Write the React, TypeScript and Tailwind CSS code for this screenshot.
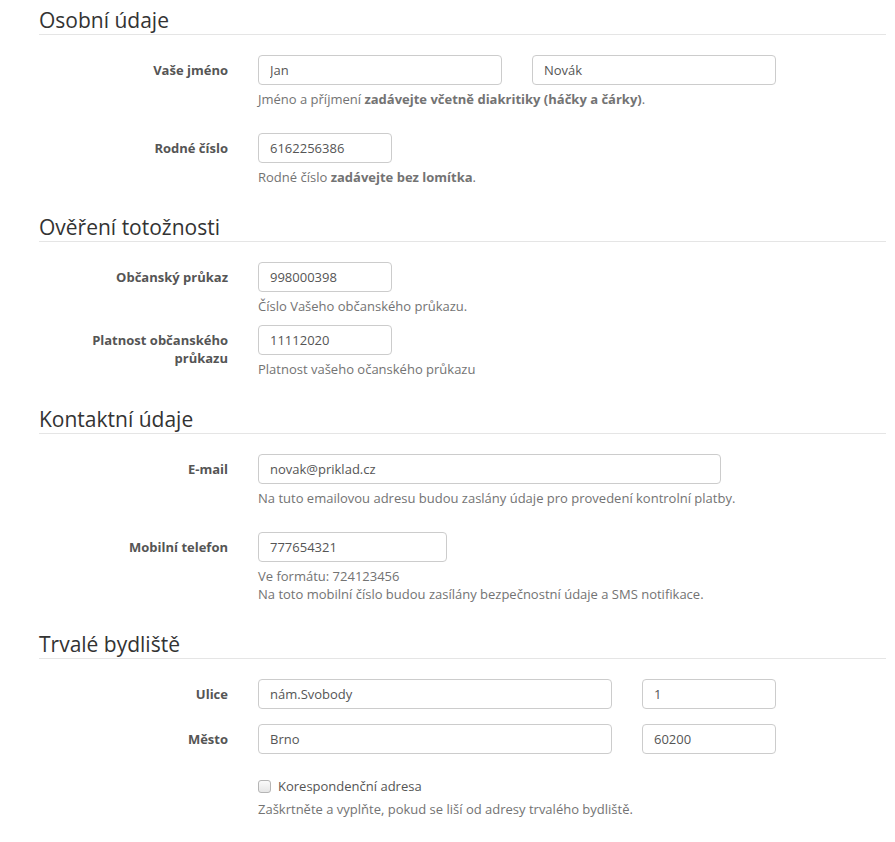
import React from "react";

const font = { fontFamily: '"Open Sans", "Liberation Sans", sans-serif' };

const Section = ({ title, children, className = "" }: { title: string; children: React.ReactNode; className?: string }) => (
  <section className={className}>
    <h2 className="text-[21px] leading-[28px] text-[#333] border-b border-[#e5e5e5] mb-[20px]">{title}</h2>
    {children}
  </section>
);

const Row = ({ label, children, className = "" }: { label: React.ReactNode; children: React.ReactNode; className?: string }) => (
  <div className={"flex " + className}>
    <label className="w-[189px] shrink-0 text-right font-bold text-[13px] leading-[18px] pt-[6px] text-[#555]">{label}</label>
    <div className="ml-[30px] flex-1">{children}</div>
  </div>
);

const Input = ({ value, w }: { value: string; w: string }) => (
  <input
    readOnly
    value={value}
    className={"h-[30px] border border-[#ccc] rounded-[4px] px-[11px] text-[13px] text-[#555] bg-white outline-none " + w}
  />
);

const Help = ({ children }: { children: React.ReactNode }) => (
  <p className="mt-[5px] text-[13px] leading-[18px] text-[#737373]">{children}</p>
);

export default function App() {
  return (
    <div className="bg-white min-h-[842px] pl-[39px] pr-[9px] pt-[6px]" style={font}>
      <Section title="Osobní údaje">
        <Row label="Vaše jméno">
          <div className="flex gap-[30px]">
            <Input value="Jan" w="w-[244px]" />
            <Input value="Novák" w="w-[244px]" />
          </div>
          <Help>
            Jméno a příjmení <b>zadávejte včetně diakritiky (háčky a čárky)</b>.
          </Help>
        </Row>
        <Row label="Rodné číslo" className="mt-[25px]">
          <Input value="6162256386" w="w-[134px]" />
          <Help>
            Rodné číslo <b>zadávejte bez lomítka</b>.
          </Help>
        </Row>
      </Section>

      <Section title="Ověření totožnosti" className="mt-[27px]">
        <Row label="Občanský průkaz">
          <Input value="998000398" w="w-[134px]" />
          <Help>Číslo Vašeho občanského průkazu.</Help>
        </Row>
        <Row label={<>Platnost občanského<br />průkazu</>} className="mt-[10px]">
          <Input value="11112020" w="w-[134px]" />
          <Help>Platnost vašeho očanského průkazu</Help>
        </Row>
      </Section>

      <Section title="Kontaktní údaje" className="mt-[27px]">
        <Row label="E-mail">
          <Input value="novak@priklad.cz" w="w-[463px]" />
          <Help>Na tuto emailovou adresu budou zaslány údaje pro provedení kontrolní platby.</Help>
        </Row>
        <Row label="Mobilní telefon" className="mt-[25px]">
          <Input value="777654321" w="w-[189px]" />
          <Help>
            Ve formátu: 724123456
            <br />
            Na toto mobilní číslo budou zasílány bezpečnostní údaje a SMS notifikace.
          </Help>
        </Row>
      </Section>

      <Section title="Trvalé bydliště" className="mt-[27px]">
        <Row label="Ulice">
          <div className="flex gap-[30px]">
            <Input value="nám.Svobody" w="w-[354px]" />
            <Input value="1" w="w-[134px]" />
          </div>
        </Row>
        <Row label="Město" className="mt-[15px]">
          <div className="flex gap-[30px]">
            <Input value="Brno" w="w-[354px]" />
            <Input value="60200" w="w-[134px]" />
          </div>
        </Row>
        <div className="ml-[219px] mt-[23px]">
          <label className="flex items-center gap-[7px] text-[13px] leading-[18px] text-[#555]">
            <span className="w-[13px] h-[13px] rounded-[3px] border border-[#b5b5b5] bg-gradient-to-b from-[#fafafa] to-[#e6e6e6]" />
            Korespondenční adresa
          </label>
          <Help>Zaškrtněte a vyplňte, pokud se liší od adresy trvalého bydliště.</Help>
        </div>
      </Section>
    </div>
  );
}
